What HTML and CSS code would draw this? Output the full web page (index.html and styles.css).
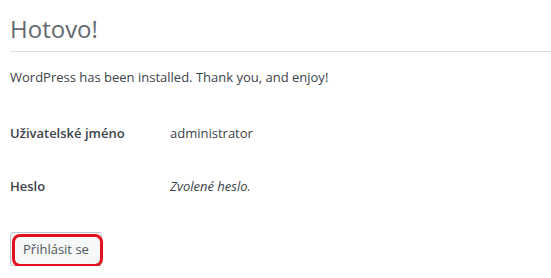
FILE: index.html
```html
<!DOCTYPE html>
<html lang="cs">
<head>
    <meta charset="UTF-8">
    <title>Hotovo!</title>
    <link rel="stylesheet" href="styles.css">
</head>
<body>
    <h1>Hotovo!</h1>

    <p class="intro">WordPress has been installed. Thank you, and enjoy!</p>

    <table class="form-table">
        <tr>
            <th>Uživatelské jméno</th>
            <td>administrator</td>
        </tr>
        <tr>
            <th>Heslo</th>
            <td><em>Zvolené heslo.</em></td>
        </tr>
    </table>

    <p class="step">
        <a class="button" href="#">Přihlásit se</a>
    </p>
</body>
</html>
```

FILE: styles.css
```css
body {
    margin: 0;
    padding: 0 0 0 10px;
    background-color: #fff;
    color: #3c434a;
    font-family: "Open Sans", "Noto Sans", sans-serif;
    font-size: 13px;
    line-height: 1.4;
}

h1 {
    margin: 13px 0 0;
    padding-bottom: 7px;
    border-bottom: 1px solid #dcdcde;
    color: #646970;
    font-size: 24px;
    font-weight: 400;
    line-height: 1.3;
}

.intro {
    margin: 16px 0 0;
}

.form-table {
    border-collapse: collapse;
    margin-top: 21px;
}

.form-table th {
    width: 160px;
    padding: 17px 0;
    text-align: left;
    font-weight: 600;
}

.form-table td {
    padding: 17px 0;
}

.step {
    margin: 20px 0 0;
}

.button {
    position: relative;
    display: inline-block;
    padding: 6px 12px;
    border: 1px solid #c3c4c7;
    border-radius: 3px;
    background-color: #f6f7f7;
    color: #50575e;
    text-decoration: none;
    line-height: 20px;
}

/* red highlight drawn over the button */
.button::after {
    content: "";
    position: absolute;
    top: 1px;
    left: 1px;
    right: -2px;
    bottom: -2px;
    border: 3px solid #e0121e;
    border-radius: 8px;
}
```
